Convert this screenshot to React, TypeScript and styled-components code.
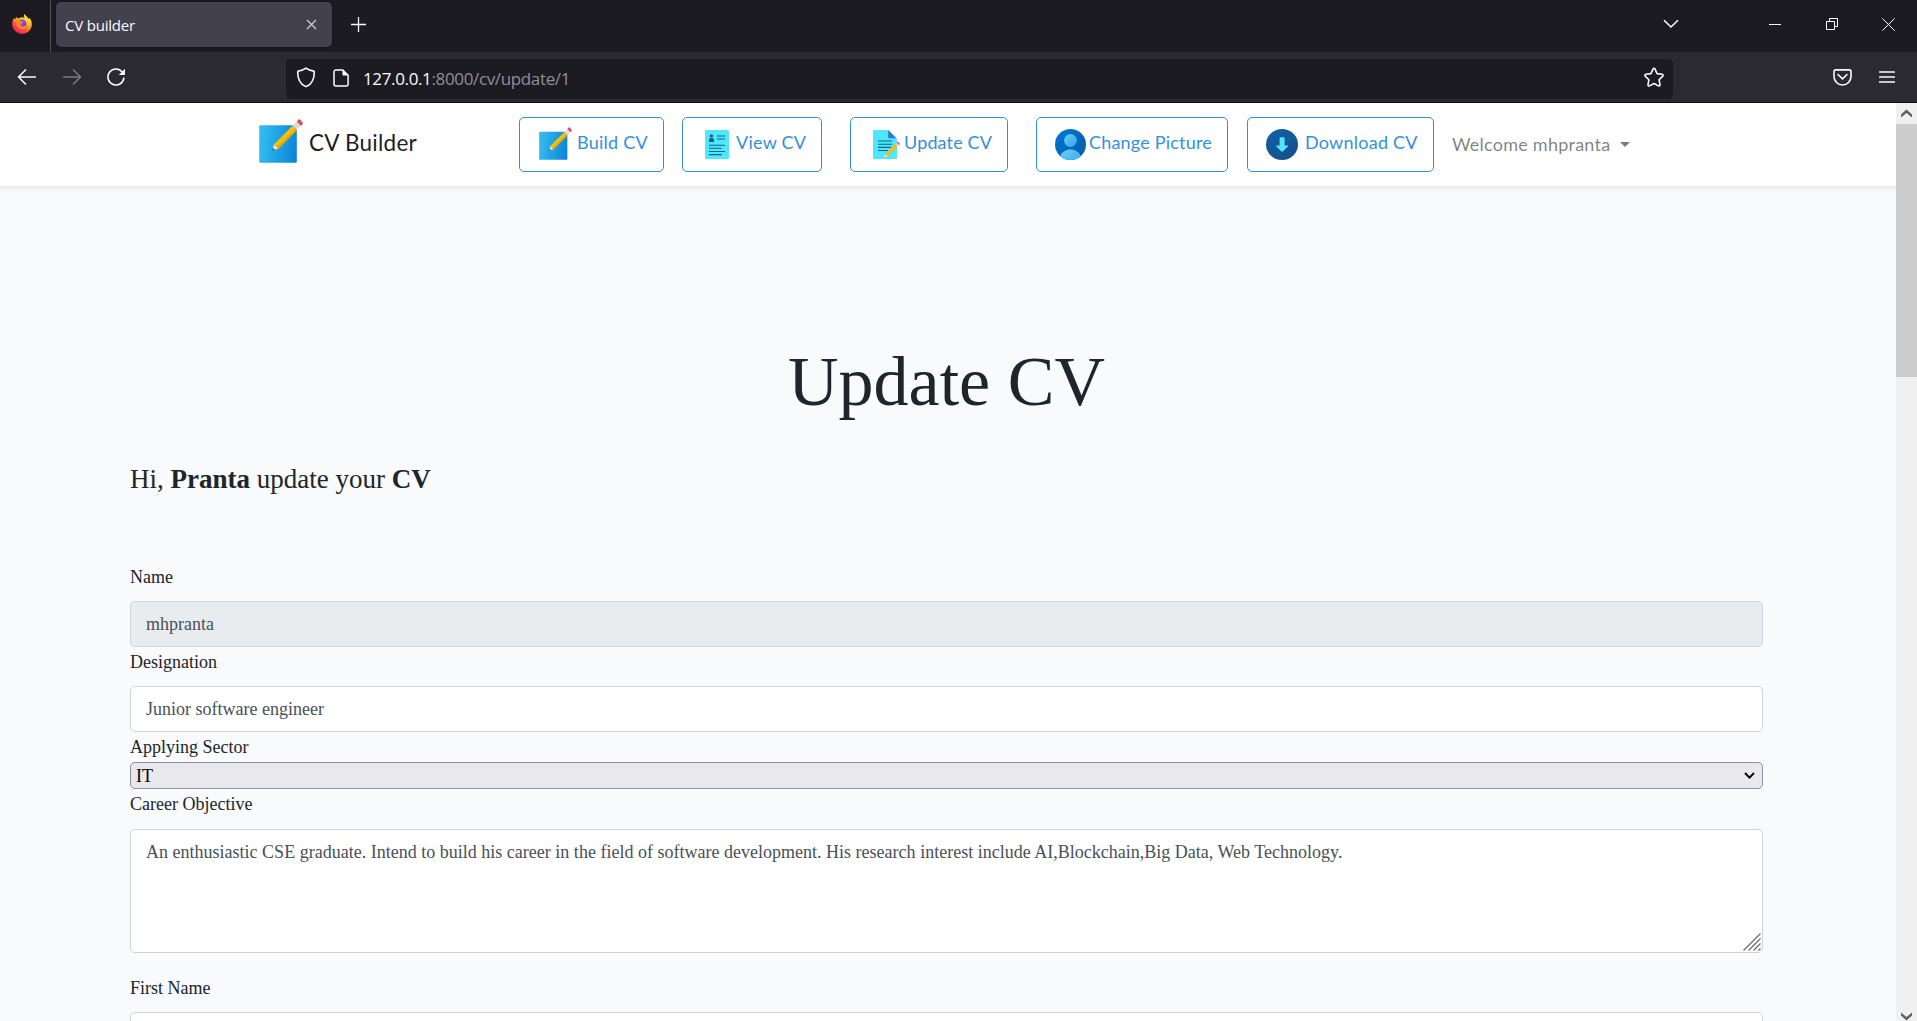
import React from "react";
import styled, { createGlobalStyle } from "styled-components";

const UI = `"Open Sans", "Noto Sans", sans-serif`;
const NAV = `Lato, "Open Sans", sans-serif`;
const SERIF = `"Liberation Serif", "Times New Roman", serif`;

const GlobalStyle = createGlobalStyle`
  * { box-sizing: border-box; }
  html, body { margin: 0; padding: 0; height: 100%; overflow: hidden; }
  svg { display: block; flex: none; }
`;

/* ---------- browser window ---------- */

const Window = styled.div`
  display: flex;
  flex-direction: column;
  width: 100vw;
  height: 100vh;
  overflow: hidden;
  background: #f8fafc;
`;

const TabStrip = styled.div`
  display: flex;
  flex: none;
  height: 52px;
  background: #1c1b22;
  font-family: ${UI};
`;

const FirefoxSlot = styled.div`
  width: 51px;
  padding: 14px 0 0 12px;
  border-right: 1px solid #4f4e58;
`;

const Tab = styled.div`
  display: flex;
  align-items: center;
  justify-content: space-between;
  width: 276px;
  height: 45px;
  margin: 2px 0 0 5px;
  padding: 1px 15px 0 9px;
  border-radius: 5px;
  background: #42414d;
  box-shadow: 0 0 3px rgba(0, 0, 0, 0.5);
  color: #fbfbfe;
  font-size: 15px;
  letter-spacing: -0.2px;
`;

const CloseSlot = styled.div`
  padding-bottom: 2px;
`;

const NewTab = styled.div`
  padding: 17px 0 0 19px;
`;

const WindowControls = styled.div`
  display: flex;
  align-items: center;
  height: 48px;
  margin-left: auto;
  padding-right: 22px;
`;

const Control = styled.div<{ $gap?: number }>`
  margin-left: ${(p) => p.$gap ?? 0}px;
`;

const Toolbar = styled.div`
  display: flex;
  align-items: center;
  flex: none;
  height: 51px;
  background: #2b2a33;
  border-bottom: 1px solid #0c0c0d;
  padding: 0 22px 0 17px;
  font-family: ${UI};
`;

const NavButtons = styled.div`
  display: flex;
  align-items: center;
  gap: 25px;
  width: 269px;
`;

const UrlBar = styled.div`
  display: flex;
  align-items: center;
  width: 1387px;
  height: 40px;
  margin-top: 4px;
  margin-bottom: 1px;
  padding: 0 8px 2px 10px;
  border-radius: 5px;
  background: #1c1b22;
`;

const PageInfo = styled.div`
  margin-left: 17px;
`;

const Url = styled.div`
  flex: 1;
  margin: 2px 0 0 14px;
  color: #8f8f97;
  font-size: 17px;
  letter-spacing: -0.36px;
`;

const Host = styled.span`
  color: #fbfbfe;
`;

const ToolbarEnd = styled.div`
  display: flex;
  align-items: center;
  gap: 27px;
  margin-left: auto;
`;

const Viewport = styled.div`
  display: flex;
  flex: 1;
  min-height: 0;
`;

const Scrollbar = styled.div`
  display: flex;
  flex-direction: column;
  justify-content: space-between;
  width: 21px;
  background: #f0f0f0;
`;

const ScrollArrow = styled.div<{ $height: number }>`
  display: flex;
  align-items: center;
  justify-content: center;
  height: ${(p) => p.$height}px;
`;

const Thumb = styled.div`
  height: 253px;
  margin-bottom: auto;
  background: #cdcdcd;
`;

/* ---------- page ---------- */

const Page = styled.div`
  flex: 1;
  min-width: 0;
  overflow: hidden;
  background: #f8fafc;
`;

const Navbar = styled.nav`
  display: flex;
  align-items: flex-start;
  height: 83px;
  padding-left: 259px;
  background: #fff;
  box-shadow: 0 2px 5px rgba(0, 0, 0, 0.085);
  font-family: ${NAV};
`;

const Brand = styled.div`
  display: flex;
  width: 260px;
  padding-top: 16px;
  color: rgba(0, 0, 0, 0.9);
`;

const BrandName = styled.div`
  margin: 11px 0 0 6px;
  font-size: 22.5px;
  line-height: 26px;
  letter-spacing: 0.25px;
`;

const NavLink = styled.div<{ $width: number; $left: number; $pad: number; $gap: number }>`
  display: flex;
  align-items: center;
  width: ${(p) => p.$width}px;
  height: 55px;
  margin: 14px 0 0 ${(p) => p.$left}px;
  padding: 0 0 0 ${(p) => p.$pad}px;
  gap: ${(p) => p.$gap}px;
  border: 1px solid #3490dc;
  border-radius: 5px;
  color: #3490dc;
  font-size: 18px;
  white-space: nowrap;
`;

const RaisedIcon = styled.div`
  padding-bottom: 3px;
`;

const LinkText = styled.span<{ $spacing: number }>`
  padding-bottom: 6px;
  letter-spacing: ${(p) => p.$spacing}px;
`;

const Welcome = styled.div`
  display: flex;
  align-items: center;
  margin: 28px 0 0 18px;
  color: rgba(0, 0, 0, 0.5);
  font-size: 18px;
  line-height: 26px;
  letter-spacing: 0.24px;
`;

const Caret = styled.span`
  margin-left: 10px;
  border-top: 5px solid #7d7d7d;
  border-left: 5px solid transparent;
  border-right: 5px solid transparent;
`;

const Content = styled.main`
  display: flex;
  flex-direction: column;
  width: 1633px;
  margin-left: 130px;
  padding-top: 154px;
  color: #212529;
  font-family: ${SERIF};
  font-size: 18px;
`;

const Title = styled.h1`
  margin: 0;
  text-align: center;
  font-size: 70px;
  font-weight: 400;
  line-height: 84px;
`;

const Greeting = styled.p`
  margin: 39px 0 67px;
  font-size: 27px;
  line-height: 32px;
`;

const Label = styled.label<{ $bottom?: number }>`
  line-height: 30px;
  margin-bottom: ${(p) => p.$bottom ?? 9}px;
`;

const Input = styled.input`
  flex: none;
  height: 46px;
  padding: 0 15px;
  border: 1px solid #ced4da;
  border-radius: 5px;
  background: #fff;
  color: #495057;
  font: inherit;
  &:disabled {
    background: #e9ecef;
  }
`;

const SelectWrap = styled.div`
  position: relative;
  height: 27px;
  svg {
    position: absolute;
    right: 8px;
    top: 10px;
  }
`;

const Select = styled.select`
  display: block;
  appearance: none;
  width: 100%;
  height: 27px;
  padding: 0 5px;
  border: 1px solid #8f8f9d;
  border-radius: 5px;
  background: #e9e9ed;
  color: #000;
  font: inherit;
`;

const AreaWrap = styled.div`
  position: relative;
  height: 124px;
  margin-bottom: 20px;
  svg {
    position: absolute;
    right: 2px;
    bottom: 2px;
  }
`;

const TextArea = styled.textarea`
  display: block;
  width: 100%;
  height: 124px;
  padding: 7px 15px;
  border: 1px solid #ced4da;
  border-radius: 5px;
  background: #fff;
  color: #495057;
  font: inherit;
  letter-spacing: 0.008px;
  line-height: 30px;
  resize: none;
`;

/* ---------- icons ---------- */

const FirefoxLogo = () => (
  <svg width="20" height="20" viewBox="0 0 20 20">
    <defs>
      <linearGradient id="fx" x1="0.8" y1="0.05" x2="0.25" y2="0.95">
        <stop offset="0" stopColor="#fff44f" />
        <stop offset="0.4" stopColor="#ffb01c" />
        <stop offset="0.7" stopColor="#ff4f3d" />
        <stop offset="1" stopColor="#f01a70" />
      </linearGradient>
      <radialGradient id="fxp" cx="0.5" cy="0.3" r="0.7">
        <stop offset="0" stopColor="#a04bff" />
        <stop offset="1" stopColor="#5a3fd6" />
      </radialGradient>
    </defs>
    <path d="M12.4 0c-.7 1.700-.5 3 .4 4-1-.7-2.700-.9-4-.6L6 4.600 4.200 3.100 3.400 5 2 4.300C.7 6 0 8.200.2 10.600.6 15.900 4.900 19.800 10 19.800c5.400 0 9.800-4.200 9.800-9.600 0-3-1.200-5.200-2.800-6.600l.2 1.900C15.800 3 14.200 2.300 12.400 0z" fill="url(#fx)" />
    <circle cx="10" cy="9.800" r="4.400" fill="url(#fxp)" />
    <path d="M4.300 6.400c2-.6 3.300-.2 4.500.8l2 .5c.3.900-1.600 1.200-2.100 2-.5.900-.2 2.400 1.300 2.800 1.700.4 3-.8 4.700-1-1 2.600-3.200 3.700-5.400 3.400-3.300-.5-5.500-3.500-5-8.500z" fill="#ff8b1c" />
  </svg>
);

const NoteIcon = ({ size, id }: { size: number; id: string }) => (
  <svg width={size} height={size} viewBox="0 0 44 44">
    <defs>
      <linearGradient id={id} x1="0" y1="0.45" x2="1" y2="0.55">
        <stop offset="0" stopColor="#32bdef" />
        <stop offset="1" stopColor="#0c85d9" />
      </linearGradient>
    </defs>
    <rect x="0.2" y="6.200" width="37.600" height="37.600" rx="1.200" fill={`url(#${id})`} />
    <path d="M13.200 31.300l1.800-6 4.400 4.400z" fill="#f2e3d5" />
    <path d="M13 31.600l.9-2.900 2 2z" fill="#45484d" />
    <path d="M15 25.300L33.700 6.600l4.400 4.400-18.700 18.700z" fill="#f0c00d" />
    <path d="M17.900 28.200l18.700-18.700 1.500 1.500-18.700 18.700z" fill="#e3a600" />
    <path d="M33.700 6.600l4-4 4.400 4.400-4 4z" fill="#dadde2" />
    <path d="M37.700 2.600l2-2c.4-.4 1-.4 1.400 0l2.500 2.900c.4.400.4 1 0 1.400l-1.500 2.100z" fill="#d2516a" />
  </svg>
);

const ResumeIcon = () => (
  <svg width="24" height="29" viewBox="0 0 24 29">
    <rect width="24" height="29" rx="1.300" fill="#50e6ff" />
    <circle cx="6.400" cy="5.900" r="1.700" fill="#076784" />
    <path d="M4 12V9.800c0-1.100.8-1.900 1.900-1.900h1.200c1.100 0 1.900.8 1.900 1.900V12z" fill="#076784" />
    <path d="M12 6h8M12 9h8M4 15.200h16M4 18.300h12.800M4 21.500h16M4 24.600h12.800" stroke="#076784" strokeWidth="1.100" />
  </svg>
);

const EditPageIcon = () => (
  <svg width="27" height="29" viewBox="0 0 27 29">
    <path d="M1.200 0H15l9 9v18.700c0 .8-.5 1.300-1.200 1.300H1.200C.5 29 0 28.500 0 27.700V1.300C0 .5.500 0 1.200 0z" fill="#50e6ff" />
    <path d="M15.200 0L23.500 8.300H16c-.5 0-.8-.4-.8-.9z" fill="#2f78d6" />
    <path d="M5 11h14M5 14.200h14M5 17.400h13M5 20.500h10" stroke="#076784" strokeWidth="1.100" />
    <path d="M11.200 27.300l.9-3.300 2.400 2.300z" fill="#f2e3d5" />
    <path d="M12.100 24l10.100-10.200 2.400 2.400-10.100 10.100z" fill="#f3bd0d" />
    <path d="M22.200 13.800l1.300-1.300 2.400 2.400-1.300 1.300z" fill="#dadde2" />
    <path d="M23.500 12.500l.6-.5c.4-.4.700-.3 1 0l1.500 1.500c.3.300.3.700 0 1l-.7.600z" fill="#d2516a" />
  </svg>
);

const PersonIcon = () => (
  <svg width="31" height="31" viewBox="0 0 31 31">
    <defs>
      <linearGradient id="pbg" x1="0" y1="0" x2="1" y2="1">
        <stop offset="0" stopColor="#0078d4" />
        <stop offset="1" stopColor="#0459a8" />
      </linearGradient>
      <linearGradient id="pfg" x1="0" y1="0" x2="1" y2="1">
        <stop offset="0" stopColor="#6cd0fa" />
        <stop offset="1" stopColor="#2aa5e8" />
      </linearGradient>
      <clipPath id="pclip"><circle cx="15.500" cy="15.500" r="15.500" /></clipPath>
    </defs>
    <circle cx="15.500" cy="15.500" r="15.500" fill="url(#pbg)" />
    <circle cx="15.500" cy="11.500" r="6.400" fill="url(#pfg)" />
    <ellipse cx="15.500" cy="30" rx="10.800" ry="9.700" fill="url(#pfg)" clipPath="url(#pclip)" />
  </svg>
);

const DownloadIcon = () => (
  <svg width="32" height="31" viewBox="0 0 32 31">
    <defs>
      <linearGradient id="dl" x1="0" y1="0" x2="0.6" y2="1">
        <stop offset="0" stopColor="#0f63a8" />
        <stop offset="1" stopColor="#17508c" />
      </linearGradient>
    </defs>
    <ellipse cx="16" cy="15.500" rx="16" ry="15.500" fill="url(#dl)" />
    <path d="M13.600 9.100c0-.5.300-.9.900-.9h3.300c.5 0 .8.400.8.900v7.400h3c.5 0 .7.500.3.900l-5.200 5.100c-.4.400-.8.400-1.200 0l-5.200-5.100c-.4-.4-.2-.9.300-.9h3z" fill="#50e6ff" />
  </svg>
);

const ScrollChevron = ({ down }: { down?: boolean }) => (
  <svg width="11" height="9" viewBox="0 0 11 9">
    <path
      d={down ? "M0 0.500L5.500 5 11 0.500V3.500L5.500 8.500 0 3.500z" : "M0 8.500L5.500 4 11 8.500V5.500L5.500 0.500 0 5.500z"}
      fill="#606060"
    />
  </svg>
);

export default function App() {
  return (
    <Window>
      <GlobalStyle />
      <TabStrip>
        <FirefoxSlot><FirefoxLogo /></FirefoxSlot>
        <Tab>
          <span>CV builder</span>
          <CloseSlot>
            <svg width="11" height="11" viewBox="0 0 11 11">
              <path d="M1 1l9 9M10 1l-9 9" stroke="#d5d5dc" strokeWidth="1.100" />
            </svg>
          </CloseSlot>
        </Tab>
        <NewTab>
          <svg width="16" height="16" viewBox="0 0 16 16">
            <path d="M0 7.500h15M7.500 0v15" stroke="#fbfbfe" strokeWidth="1.300" />
          </svg>
        </NewTab>
        <WindowControls>
          <Control>
            <svg width="16" height="10" viewBox="0 0 16 10">
              <path d="M1 1.200l7 6.800 7-6.800" fill="none" stroke="#fbfbfe" strokeWidth="1.600" />
            </svg>
          </Control>
          <Control $gap={90}>
            <svg width="12" height="1" viewBox="0 0 12 1"><rect width="12" height="1" fill="#fff" /></svg>
          </Control>
          <Control $gap={45}>
            <svg width="12" height="12" viewBox="0 0 12 12">
              <path d="M.5 3.500h8v8h-8zM3.500 3.500v-3h8v8h-3" fill="none" stroke="#fff" />
            </svg>
          </Control>
          <Control $gap={44}>
            <svg width="13" height="13" viewBox="0 0 13 13">
              <path d="M.4.4l12.200 12.200M12.600.4L.4 12.600" stroke="#fff" />
            </svg>
          </Control>
        </WindowControls>
      </TabStrip>

      <Toolbar>
        <NavButtons>
          <svg width="20" height="18" viewBox="0 0 20 18">
            <path d="M9 1.500L1.500 9 9 16.500M1.500 9H19" fill="none" stroke="#fbfbfe" strokeWidth="1.500" />
          </svg>
          <svg width="20" height="18" viewBox="0 0 20 18">
            <path d="M11 1.500L18.500 9 11 16.500M18.500 9H1" fill="none" stroke="#7b7a82" strokeWidth="1.500" />
          </svg>
          <svg width="19" height="18" viewBox="0 0 19 18">
            <path d="M16.900 9.600A8 8 0 1 1 15.200 4" fill="none" stroke="#fbfbfe" strokeWidth="1.600" />
            <path d="M18 .7v5.600c0 .4-.2.600-.6.600h-5.600z" fill="#fbfbfe" />
          </svg>
        </NavButtons>
        <UrlBar>
          <svg width="20" height="21" viewBox="0 0 20 21">
            <path d="M10 1.200c2.300 1.700 5 2.500 7.700 2.900.3 0 .6.400.6.800 0 6-1.500 11.600-7.600 14.400-.5.200-.9.200-1.400 0C3.200 16.500 1.700 10.900 1.700 4.900c0-.4.300-.8.600-.8C5 3.700 7.700 2.900 10 1.200z" fill="none" stroke="#fbfbfe" strokeWidth="1.600" />
          </svg>
          <PageInfo>
            <svg width="16" height="18" viewBox="0 0 16 18">
              <path d="M3 .9h6.800l5.300 5.300V15a2 2 0 0 1-2 2H3a2 2 0 0 1-2-2V2.900a2 2 0 0 1 2-2z" fill="none" stroke="#fbfbfe" strokeWidth="1.500" />
              <path d="M9.500.9v4.800c0 .5.400.9.900.9h4.700z" fill="#fbfbfe" />
            </svg>
          </PageInfo>
          <Url><Host>127.0.0.1</Host>:8000/cv/update/1</Url>
          <svg width="22" height="21" viewBox="0 0 22 21">
            <path d="M10.100 1.900c.4-.8 1.400-.8 1.800 0l2.200 4.700 5.100.7c.9.100 1.200 1.200.6 1.800l-3.700 3.600.9 5.100c.1.900-.8 1.500-1.500 1.100L11 16.500l-4.500 2.400c-.7.400-1.600-.2-1.500-1.100l.9-5.100L2.200 9.100c-.6-.6-.3-1.700.6-1.800l5.100-.7z" fill="none" stroke="#fbfbfe" strokeWidth="1.600" strokeLinejoin="round" />
          </svg>
        </UrlBar>
        <ToolbarEnd>
          <svg width="19" height="17" viewBox="0 0 19 17">
            <path d="M2.600.9h13.800c.9 0 1.600.7 1.600 1.600v5a8.500 8.500 0 0 1-17 0v-5C1 1.600 1.700.9 2.600.9z" fill="none" stroke="#fbfbfe" strokeWidth="1.600" />
            <path d="M5 5.500l4.500 4.300L14 5.500" fill="none" stroke="#fbfbfe" strokeWidth="1.600" strokeLinecap="round" />
          </svg>
          <svg width="16" height="12" viewBox="0 0 16 12">
            <path d="M.5 1h15M.5 6h15M.5 11h15" stroke="#fbfbfe" strokeWidth="1.300" strokeLinecap="round" />
          </svg>
        </ToolbarEnd>
      </Toolbar>

      <Viewport>
        <Page>
          <Navbar>
            <Brand>
              <NoteIcon size={44} id="brand-note" />
              <BrandName>CV Builder</BrandName>
            </Brand>
            <NavLink $width={145} $left={0} $pad={19} $gap={5}>
              <RaisedIcon><NoteIcon size={33} id="build-note" /></RaisedIcon>
              <LinkText $spacing={0.25}>Build CV</LinkText>
            </NavLink>
            <NavLink $width={140} $left={18} $pad={22} $gap={7}>
              <ResumeIcon />
              <LinkText $spacing={0.25}>View CV</LinkText>
            </NavLink>
            <NavLink $width={158} $left={28} $pad={22} $gap={4}>
              <EditPageIcon />
              <LinkText $spacing={0.16}>Update CV</LinkText>
            </NavLink>
            <NavLink $width={192} $left={28} $pad={18} $gap={3}>
              <PersonIcon />
              <LinkText $spacing={0.2}>Change Picture</LinkText>
            </NavLink>
            <NavLink $width={187} $left={19} $pad={18} $gap={7}>
              <DownloadIcon />
              <LinkText $spacing={0.24}>Download CV</LinkText>
            </NavLink>
            <Welcome>Welcome mhpranta<Caret /></Welcome>
          </Navbar>
          <Content>
            <Title>Update CV</Title>
            <Greeting>Hi, <b>Pranta</b> update your <b>CV</b></Greeting>
            <Label>Name</Label>
            <Input defaultValue="mhpranta" disabled />
            <Label>Designation</Label>
            <Input defaultValue="Junior software engineer" />
            <Label $bottom={0}>Applying Sector</Label>
            <SelectWrap>
              <Select defaultValue="IT"><option>IT</option></Select>
              <svg width="11" height="8" viewBox="0 0 11 8">
                <path d="M1 1l4.500 4.700L10 1" fill="none" stroke="#000" strokeWidth="1.900" />
              </svg>
            </SelectWrap>
            <Label $bottom={10}>Career Objective</Label>
            <AreaWrap>
              <TextArea defaultValue="An enthusiastic CSE graduate. Intend to build his career in the field of software development. His research interest include AI,Blockchain,Big Data, Web Technology." />
              <svg width="18" height="18" viewBox="0 0 18 18">
                <path d="M.5 17.500l17-17M5.500 17.500l12-12M10.500 17.500l7-7M15.500 17.500l2-2" stroke="#6a6a6a" strokeWidth="1.200" />
              </svg>
            </AreaWrap>
            <Label>First Name</Label>
            <Input />
          </Content>
        </Page>
        <Scrollbar>
          <ScrollArrow $height={21}><ScrollChevron /></ScrollArrow>
          <Thumb />
          <ScrollArrow $height={9}><ScrollChevron down /></ScrollArrow>
        </Scrollbar>
      </Viewport>
    </Window>
  );
}
